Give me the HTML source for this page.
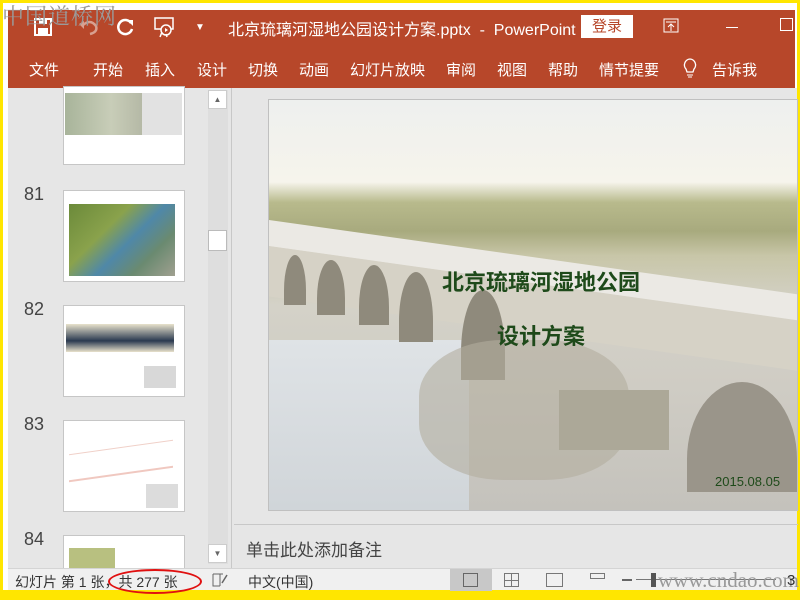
<!DOCTYPE html>
<html><head><meta charset="utf-8"><style>
*{margin:0;padding:0;box-sizing:border-box}
body{width:800px;height:600px;background:#ffe600;position:relative;overflow:hidden;font-family:"Liberation Sans","Noto Sans CJK SC",sans-serif}
.a{position:absolute}
#win{left:3px;top:3px;width:794px;height:587px;background:#fff}
#title{left:8px;top:10px;width:787px;height:38px;background:#b7472a;color:#fff}
#tabs{left:8px;top:48px;width:787px;height:40px;background:#b7472a;color:#fff;font-size:15px}
#tabs span{position:absolute;top:11px}
#left{left:8px;top:88px;width:223px;height:480px;background:#e6e6e6}
#main{left:231px;top:88px;width:566px;height:480px;background:#e6e6e6;border-left:1px solid #c8c8c8}
.num{position:absolute;left:16px;font-size:18px;color:#444}
.th{position:absolute;left:55px;width:122px;height:92px;background:#fff;border:1px solid #c6c6c6}
#status{left:8px;top:568px;width:789px;height:22px;background:#f0f0f0;font-size:14px;color:#333;border-top:1px solid #d4d4d4}
.arch{position:absolute;border-radius:50% 50% 0 0/70% 70% 0 0;background:#8f8a7c}
</style></head><body>
<div class="a" id="win"></div>
<div class="a" id="title">
 <svg class="a" style="left:26px;top:8px" width="18" height="18" viewBox="0 0 18 18"><rect x="1" y="1" width="16" height="16" fill="none" stroke="#fff" stroke-width="2"/><rect x="4" y="10" width="10" height="6" fill="#fff"/><rect x="5" y="2" width="8" height="4" fill="#fff"/></svg>
 <svg class="a" style="left:70px;top:8px" width="28" height="18"><path d="M4 8 Q12 0 18 8 Q20 14 12 16" stroke="#d8a090" stroke-width="2.5" fill="none"/><path d="M1 6 L6 3 L6 11Z" fill="#d8a090"/></svg>
 <svg class="a" style="left:108px;top:7px" width="20" height="20"><path d="M15 6 A7 7 0 1 0 16 12" stroke="#fff" stroke-width="2.5" fill="none"/><path d="M11 3 L17 3 L17 9Z" fill="#fff"/></svg>
 <svg class="a" style="left:145px;top:6px" width="22" height="22"><rect x="2" y="2" width="18" height="11" fill="none" stroke="#fff" stroke-width="1.5"/><circle cx="13" cy="14" r="5" fill="#b7472a" stroke="#fff" stroke-width="1.5"/><path d="M12 12 L15 14 L12 16Z" fill="#fff"/><path d="M9 16 L7 21 M13 18 L14 21" stroke="#fff" stroke-width="1.5"/></svg>
 <div class="a" style="left:187px;top:12px;font-size:10px">&#9660;</div>
 <div class="a" style="left:220px;top:6px;font-size:16px;white-space:nowrap">北京琉璃河湿地公园设计方案.pptx&nbsp; - &nbsp;PowerPoint</div>
 <div class="a" style="left:573px;top:5px;width:52px;height:23px;background:#fff;color:#b7472a;font-size:15px;text-align:center;line-height:23px">登录</div>
 <svg class="a" style="left:655px;top:8px" width="16" height="16"><rect x="1" y="1" width="14" height="13" fill="none" stroke="#fff"/><path d="M3 4H13M8 13V6M5 9L8 6L11 9" stroke="#fff" fill="none"/></svg>
 <div class="a" style="left:718px;top:17px;width:12px;height:1px;background:#fff"></div>
 <div class="a" style="left:772px;top:8px;width:13px;height:13px;border:1px solid #fff"></div>
</div>
<div class="a" style="left:2px;top:0px;font-size:22px;color:#9a9a9a;letter-spacing:1px;font-family:'Noto Serif CJK SC',serif">中国道桥网</div>
<div class="a" id="tabs">
 <span style="left:21px">文件</span><span style="left:85px">开始</span><span style="left:137px">插入</span><span style="left:189px">设计</span><span style="left:240px">切换</span><span style="left:291px">动画</span><span style="left:342px">幻灯片放映</span><span style="left:438px">审阅</span><span style="left:489px">视图</span><span style="left:540px">帮助</span><span style="left:591px">情节提要</span><span style="left:704px">告诉我</span>
 <svg class="a" style="left:674px;top:9px" width="16" height="22"><path d="M8 2 A6 6 0 0 0 4 12 L5 15 H11 L12 12 A6 6 0 0 0 8 2Z" fill="none" stroke="#fff" stroke-width="1.3"/><path d="M5 18H11M6 20H10" stroke="#fff"/></svg>
</div>
<div class="a" id="left">
 <div class="th" style="top:-2px;height:79px"><div class="a" style="left:1px;top:6px;width:77px;height:42px;background:linear-gradient(90deg,#a8b49a,#c8cdb8 60%,#b5b9a6)"></div><div class="a" style="left:78px;top:6px;width:40px;height:42px;background:#e2e2e2"></div></div>
 <div class="num" style="top:96px">81</div>
 <div class="th" style="top:102px"><div class="a" style="left:5px;top:13px;width:106px;height:72px;background:linear-gradient(135deg,#6b8a3a,#8aa24c 35%,#4f88a8 55%,#6a8a70 75%,#a0a090)"></div></div>
 <div class="num" style="top:211px">82</div>
 <div class="th" style="top:217px"><div class="a" style="left:2px;top:18px;width:108px;height:28px;background:linear-gradient(180deg,#e8e2cc,#2a3a50 60%,#e8e2cc)"></div><div class="a" style="left:80px;top:60px;width:32px;height:22px;background:#d8d8d8"></div></div>
 <div class="num" style="top:326px">83</div>
 <div class="th" style="top:332px"><div class="a" style="left:5px;top:26px;width:104px;height:28px;border-bottom:2px solid #f0c8c0;border-top:1px solid #f0d0c8;transform:skewY(-8deg)"></div><div class="a" style="left:82px;top:63px;width:32px;height:24px;background:#dcdcdc"></div></div>
 <div class="num" style="top:441px">84</div>
 <div class="th" style="top:447px;height:40px"><div class="a" style="left:5px;top:12px;width:46px;height:28px;background:#b8c080"></div></div>
 <div class="a" style="left:200px;top:2px;width:20px;height:474px;background:#dedede"></div>
 <div class="a" style="left:200px;top:2px;width:19px;height:19px;background:#fff;border:1px solid #ccc;font-size:8px;color:#666;text-align:center;line-height:17px">&#9650;</div>
 <div class="a" style="left:200px;top:142px;width:19px;height:21px;background:#fff;border:1px solid #bbb"></div>
 <div class="a" style="left:200px;top:456px;width:19px;height:19px;background:#fff;border:1px solid #ccc;font-size:8px;color:#666;text-align:center;line-height:17px">&#9660;</div>
</div>
<div class="a" id="main">
 <div class="a" style="left:36px;top:11px;width:530px;height:412px;border:1px solid #c0c0c0;overflow:hidden;background:linear-gradient(180deg,#eef0ee 0%,#f6f4ec 20%,#b8ba8c 25%,#a8aa7e 32%,#c8c6a8 38%,#d4d2c8 50%,#cfccc4 70%,#c4c2bc 100%)">
  <div class="a" style="left:0;top:240px;width:200px;height:180px;background:linear-gradient(180deg,#dfe3e6,#cfd4d8)"></div>
  <div class="a" style="left:0;top:120px;width:600px;height:26px;background:#ebe9e4;transform:rotate(8deg);transform-origin:left top"></div>
  <div class="a" style="left:0;top:146px;width:600px;height:50px;background:#d6d2c6;transform:rotate(8deg);transform-origin:left top"></div>
  <div class="arch" style="left:15px;top:155px;width:22px;height:50px"></div>
  <div class="arch" style="left:48px;top:160px;width:28px;height:55px"></div>
  <div class="arch" style="left:90px;top:165px;width:30px;height:60px"></div>
  <div class="arch" style="left:130px;top:172px;width:34px;height:70px"></div>
  <div class="arch" style="left:192px;top:190px;width:44px;height:90px"></div>
  <div class="a" style="left:150px;top:240px;width:210px;height:140px;background:#b2ae9e;opacity:.6;border-radius:40%"></div>
  <div class="arch" style="left:418px;top:282px;width:110px;height:110px;background:#9a958a"></div>
  <div class="a" style="left:290px;top:290px;width:110px;height:60px;background:#aca898"></div>
  <div class="a" style="left:0;top:165px;width:530px;text-align:center;font-size:22px;font-weight:bold;color:#1e4a1a;padding-left:14px">北京琉璃河湿地公园</div>
  <div class="a" style="left:0;top:219px;width:530px;text-align:center;font-size:22px;font-weight:bold;color:#1e4a1a;padding-left:14px">设计方案</div>
  <div class="a" style="left:446px;top:374px;font-size:13px;color:#1e4a1a">2015.08.05</div>
 </div>
 <div class="a" style="left:2px;top:436px;width:564px;height:1px;background:#c8c8c8"></div>
 <div class="a" style="left:14px;top:448px;font-size:17px;color:#444">单击此处添加备注</div>
</div>
<div class="a" id="status">
 <div class="a" style="left:7px;top:3px">幻灯片 第 1 张，共 277 张</div>
 <div class="a" style="left:100px;top:0;width:94px;height:25px;border:2px solid #e01010;border-radius:50%"></div>
 <svg class="a" style="left:203px;top:3px" width="18" height="16"><path d="M2 2V14H9M2 2H9V14M9 2H12" stroke="#666" fill="none"/><path d="M16 3L11 11" stroke="#666" stroke-width="1.5"/></svg>
 <div class="a" style="left:240px;top:3px">中文(中国)</div>
 <div class="a" style="left:442px;top:0;width:42px;height:22px;background:#c8c8c8"></div>
 <div class="a" style="left:455px;top:4px;width:15px;height:14px;border:1px solid #666"></div>
 <div class="a" style="left:496px;top:4px;width:15px;height:14px;border:1px solid #777;background:linear-gradient(#777,#777) 6px 0/1px 14px no-repeat,linear-gradient(#777,#777) 0 6px/14px 1px no-repeat"></div>
 <div class="a" style="left:538px;top:4px;width:17px;height:14px;border:1px solid #777"></div>
 <div class="a" style="left:582px;top:4px;width:15px;height:6px;border:1px solid #777"></div>
 <div class="a" style="left:614px;top:10px;width:10px;height:2px;background:#666"></div>
 <div class="a" style="left:628px;top:10px;width:140px;height:1px;background:#777"></div>
 <div class="a" style="left:643px;top:4px;width:5px;height:14px;background:#555"></div>
 <div class="a" style="left:650px;top:-1px;font-size:21px;color:#999;font-family:'Liberation Serif',serif">www.cndao.com</div>
 <div class="a" style="left:779px;top:3px;font-size:15px">3</div>
</div>
</body></html>
